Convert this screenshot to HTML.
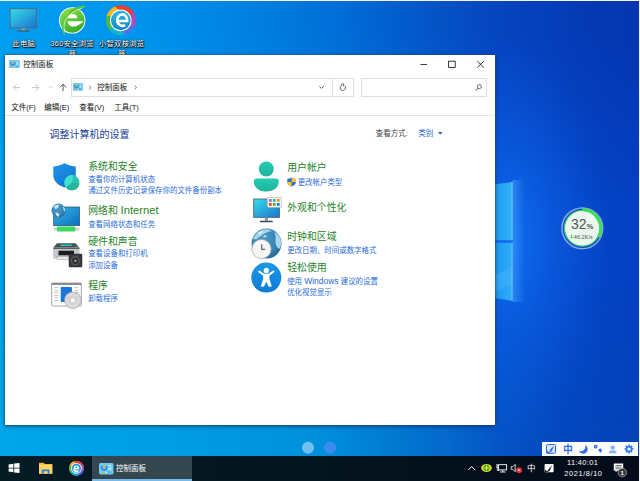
<!DOCTYPE html>
<html lang="zh-CN">
<head>
<meta charset="utf-8">
<title>控制面板</title>
<style>
*{margin:0;padding:0;box-sizing:border-box}
html,body{width:640px;height:481px;overflow:hidden;background:#0450c4}
body{position:relative;font-family:"Liberation Sans","Noto Sans CJK SC",sans-serif;font-size:7.5px;color:#000}
.abs{position:absolute}
svg{position:absolute;overflow:visible}
#bg{position:absolute;left:0;top:0;width:640px;height:481px;
 background:linear-gradient(90deg,#00a4ec 0%,#009cea 20%,#008ce4 40%,#0478dc 55%,#0664d6 68%,#0852d2 78%,#0648ca 88%,#0440c2 100%);}
#bgt{position:absolute;left:0;top:0;width:640px;height:481px;
 background:linear-gradient(90deg,#009ef0 0%,#0094ec 22%,#0080e0 39%,#0070d8 51.500%,#0450c4 70%,#0644c0 78%,#0438b2 94%,#0436b0 100%);
 -webkit-mask-image:linear-gradient(to bottom,#000 0%,#000 6%,transparent 42%);mask-image:linear-gradient(to bottom,#000 0%,#000 6%,transparent 42%);}
#bg2{position:absolute;left:0;top:0;width:640px;height:481px;
 background:linear-gradient(90deg,#00a6e8 0%,#009ee4 25%,#0090dc 50%,#0078d0 62.500%,#0468cc 70%,#0454c6 78%,#0448be 88%,#0442b6 100%);
 -webkit-mask-image:linear-gradient(to bottom,transparent 58%,#000 92%);mask-image:linear-gradient(to bottom,transparent 58%,#000 92%);}
#topline{position:absolute;left:0;top:0;width:640px;height:1px;background:#f4f4ec}
#rightline{position:absolute;left:638.800px;top:0;width:1.200px;height:481px;background:#eef0f8;z-index:5}
.dlabel{position:absolute;color:#fff;font-size:7.3px;letter-spacing:.3px;line-height:9.5px;text-align:center;width:52px;text-shadow:0 0 1.5px #000,.5px .8px 1.2px #000,.5px .8px 1.5px rgba(0,0,0,.8)}
#win{position:absolute;left:4.7px;top:55px;width:490px;height:369.6px;background:#fff;box-shadow:0 0 0 .6px rgba(60,90,120,.55),0 1px 4px rgba(0,25,60,.7)}
#win .t{position:absolute;white-space:nowrap;line-height:1}
.h{color:#26842a;font-size:9.9px}
.l{color:#2a6cdc;font-size:7.45px}
#taskbar{position:absolute;left:0;top:456.3px;width:640px;height:24.7px;background:linear-gradient(90deg,#051b25 0%,#04161f 45%,#040f1c 75%,#040b1a 100%)}
</style>
</head>
<body>
<svg width="0" height="0" style="position:absolute">
 <defs>
  <linearGradient id="gScreen" x1="0" y1="0" x2="1" y2="1"><stop offset="0" stop-color="#38dcea"/><stop offset="1" stop-color="#1874cc"/></linearGradient>
  <linearGradient id="gNet" x1="0" y1="0" x2="1" y2="1"><stop offset="0" stop-color="#34b8e4"/><stop offset="1" stop-color="#0f6cc0"/></linearGradient>
  <linearGradient id="gShield" x1="0" y1="0" x2="0.6" y2="1"><stop offset="0" stop-color="#2098e8"/><stop offset="1" stop-color="#1074d2"/></linearGradient>
  <linearGradient id="gUser" x1="0" y1="0" x2="0" y2="1"><stop offset="0" stop-color="#24ccb4"/><stop offset="1" stop-color="#1eb49c"/></linearGradient>
  <linearGradient id="gEase" x1="0" y1="0" x2="0" y2="1"><stop offset="0" stop-color="#1c98e6"/><stop offset="1" stop-color="#0c7cd6"/></linearGradient>
  <radialGradient id="gGlobe" cx="0.4" cy="0.35" r="0.7"><stop offset="0" stop-color="#4a9cc8"/><stop offset="0.7" stop-color="#3484b4"/><stop offset="1" stop-color="#20648c"/></radialGradient>
  <radialGradient id="gDisc" cx="0.5" cy="0.5" r="0.5"><stop offset="0" stop-color="#fff"/><stop offset="0.22" stop-color="#f4f4f4"/><stop offset="0.28" stop-color="#d0d0d0"/><stop offset="0.8" stop-color="#dedede"/><stop offset="1" stop-color="#bcbcbc"/></radialGradient>
  <linearGradient id="gXz" x1="0" y1="0" x2="0" y2="1"><stop offset="0" stop-color="#2abce4"/><stop offset="1" stop-color="#1684c8"/></linearGradient>
  <linearGradient id="g360" x1="0.2" y1="0" x2="0.7" y2="1"><stop offset="0" stop-color="#90e048"/><stop offset=".55" stop-color="#58c434"/><stop offset="1" stop-color="#38a828"/></linearGradient>
  
 </defs>
</svg>

<div id="bg"></div>
<div id="bgt"></div>
<div id="bg2"></div>
<!-- wallpaper window panes -->
<svg style="left:0;top:0" width="640" height="481" viewBox="0 0 640 481">
 <defs>
  <radialGradient id="glow" cx="0.5" cy="0.5" r="0.5"><stop offset="0" stop-color="#1070f4" stop-opacity=".85"/><stop offset=".5" stop-color="#0c64ec" stop-opacity=".4"/><stop offset="1" stop-color="#0a5ce8" stop-opacity="0"/></radialGradient>
  <linearGradient id="pane" x1="0" y1="0" x2="1" y2="0"><stop offset="0" stop-color="#1c9cf2"/><stop offset=".88" stop-color="#30aef8"/><stop offset="1" stop-color="#6cccff"/></linearGradient>
 </defs>
 <ellipse cx="512" cy="242" rx="95" ry="200" fill="url(#glow)"/>
 <linearGradient id="edge" x1="0" y1="0" x2="1" y2="0"><stop offset="0" stop-color="#48a8ff" stop-opacity=".5"/><stop offset="1" stop-color="#48a8ff" stop-opacity="0"/></linearGradient>
 <rect x="512.700" y="180" width="12" height="122" fill="url(#edge)"/>
 <polygon points="494,184.600 512.700,181.800 512.700,240.200 494,240.200" fill="url(#pane)"/>
 <polygon points="494,242.800 512.700,242.800 512.700,301 494,298" fill="url(#pane)" opacity=".94"/>
 <polygon points="494,276 512.700,266 512.700,284 494,292" fill="#60c0ff" opacity=".25"/>
 <circle cx="308" cy="447.8" r="6" fill="#70c0f0"/>
 <circle cx="330" cy="447.8" r="6" fill="#3a8cf0"/>
</svg>
<div id="topline"></div>
<div id="rightline"></div>

<!-- desktop icons -->
<svg style="left:0;top:0" width="160" height="56" viewBox="0 0 160 56">
 <!-- this pc -->
 <rect x="10.2" y="8.7" width="26.2" height="19.2" fill="url(#gScreen)" stroke="#566878" stroke-width=".9"/>
 <rect x="21.6" y="28.2" width="3.4" height="2.4" fill="#8c98a4"/>
 <rect x="17" y="30.4" width="12.6" height="1.4" fill="#4c5c6c"/>
 <!-- 360 -->
 <circle cx="72.200" cy="20.400" r="13.200" fill="#fff"/>
 <circle cx="72.200" cy="20.400" r="12.300" fill="url(#g360)"/>
 <path d="M67.600 18.200 A4.900 4.300 0 0 1 77.400 18.200 Z" fill="#fff"/>
 <path d="M67.400 21.200 H83.400 Q82 23.800 78.400 24.900 Q74.200 27.700 70.400 25.900 Q67.800 24.200 67.400 21.200Z" fill="#fff"/>
 <path d="M83 7.600 C73.500 10 64.600 17.500 64.100 24.500 C63.900 27.500 64.300 30 65 32" fill="none" stroke="#e8f8dc" stroke-width="1" stroke-linecap="round" opacity=".85"/>
 <path d="M84.500 6.400 C73 8.500 63.200 17 62.700 24.500 C62.500 28 63.200 31.500 64.400 34.200" fill="none" stroke="#64c83c" stroke-width="1.400" stroke-linecap="round"/>
 <path d="M84.500 6.400 C79 6.800 74 9 70 12" fill="none" stroke="#5cc034" stroke-width="1.800" stroke-linecap="round"/>
 <!-- xiaozhi -->
 <g>
  <circle cx="121" cy="20.2" r="14.6" fill="#4a74ee"/>
  <path d="M114.47 6.70 A15.00 15.00 0 0 1 133.41 11.77 L127.74 22.11 L123.87 13.82 Z" fill="#ee3e34"/>
  <path d="M133.17 11.43 A15.00 15.00 0 0 1 134.50 26.73 L122.72 26.99 L127.79 21.92 Z" fill="#a84cc0"/>
  <path d="M134.68 26.35 A15.00 15.00 0 0 1 124.68 34.74 L116.91 25.88 L122.91 26.94 Z" fill="#4a74ee"/>
  <path d="M125.08 34.63 A15.00 15.00 0 0 1 110.25 30.66 L114.04 19.49 L117.07 25.99 Z" fill="#12b4c8"/>
  <path d="M110.54 30.95 A15.00 15.00 0 0 1 106.57 16.12 L118.13 13.82 L114.02 19.69 Z" fill="#4cb848"/>
  <path d="M106.46 16.52 A15.00 15.00 0 0 1 114.85 6.52 L124.05 13.90 L117.95 13.90 Z" fill="#f8b81c"/>
  <circle cx="120.8" cy="20.4" r="10.800" fill="#fff"/>
  <circle cx="120.8" cy="20.4" r="9.800" fill="url(#gXz)"/>
  <path transform="translate(121.500 20.700) scale(6.300)" d="M-0.78 0.05 H0.9 A0.8 0.9 0 1 0 0.55 0.66" fill="none" stroke="#fff" stroke-width=".42"/>
 </g>
</svg>
<div class="dlabel" style="left:-2.300px;top:39px">此电脑</div>
<div class="dlabel" style="left:46.200px;top:39px">360安全浏览<br>器</div>
<div class="dlabel" style="left:95.700px;top:39px">小智双核浏览<br>器</div>

<div id="win">
 <svg style="left:4.6px;top:5px" width="10.9" height="8.1"><g transform="scale(0.4955 0.5062)"><rect x="0" y="0" width="22" height="16" rx="2.2" fill="#6ccaf8"/>
   <path d="M4.400 4.400 A3.900 3.900 0 1 0 11.400 4.400" fill="none" stroke="#1a8ee8" stroke-width="2.600"/>
   <circle cx="8.600" cy="5" r="2" fill="#f4a020"/>
   <rect x="3" y="12" width="6" height="1.8" rx=".6" fill="#f0a428"/>
   <rect x="9.5" y="12" width="2" height="1.8" fill="#fff"/>
   <path d="M14 4 l4 -1 M14 9 l5 -3 M15.5 6.5 l3 4" stroke="#fff" stroke-width="1.3" fill="none" opacity=".85"/>
   <rect x="13" y="12" width="6" height="1.6" fill="#3a9cf0" opacity=".8"/></g></svg>
 <div class="t" style="left:18.5px;top:5.5px;font-size:7.5px;color:#111">控制面板</div>
 <!-- caption buttons -->
 <svg style="left:0;top:0" width="490" height="62" viewBox="0 0 490 62">
  <path d="M415.5 9.5h6.5" stroke="#222" stroke-width=".9"/>
  <rect x="443.6" y="6.2" width="6.6" height="6.2" fill="none" stroke="#222" stroke-width=".9"/>
  <path d="M472.2 6 l6.8 6.6 M479 6 l-6.8 6.6" stroke="#222" stroke-width=".9"/>
  <!-- nav arrows -->
  <path d="M15.2 32.6 H8.4 M11.6 29.4 L8.4 32.6 L11.6 35.8" stroke="#c4c4c4" stroke-width="1" fill="none"/>
  <path d="M27 32.6 H33.8 M30.6 29.4 L33.8 32.6 L30.6 35.8" stroke="#c4c4c4" stroke-width="1" fill="none"/>
  <path d="M43.6 31 l2 2 l2 -2" stroke="#c8c8c8" stroke-width=".8" fill="none"/>
  <path d="M58 36 V29.2 M54.8 32.4 L58 29.2 L61.2 32.4" stroke="#555" stroke-width="1" fill="none"/>
  <!-- breadcrumb chevrons -->
  <path d="M84.2 30.8 l1.8 1.8 l-1.8 1.8" stroke="#555" stroke-width=".8" fill="none"/>
  <path d="M129.8 30.8 l1.8 1.8 l-1.8 1.8" stroke="#555" stroke-width=".8" fill="none"/>
  <path d="M314.4 31.2 l2.2 2.2 l2.2 -2.2" stroke="#444" stroke-width=".9" fill="none"/>
  <!-- refresh -->
  <path d="M339.6 30.8 a2.7 2.7 0 1 1 -2.6 -0.6" stroke="#444" stroke-width=".8" fill="none"/>
  <path d="M336 29 h2.6 v2.4" stroke="#444" stroke-width=".8" fill="none"/>
  <!-- search -->
  <circle cx="474.4" cy="31.6" r="2" stroke="#444" stroke-width=".8" fill="none"/>
  <path d="M473 33.2 l-2.2 2.4" stroke="#444" stroke-width=".9"/>
 </svg>
 <div class="t" style="left:6.5px;top:49px;font-size:7.5px;color:#111">文件(F)</div>
 <div class="t" style="left:39.5px;top:49px;font-size:7.5px;color:#111">编辑(E)</div>
 <div class="t" style="left:74.5px;top:49px;font-size:7.5px;color:#111">查看(V)</div>
 <div class="t" style="left:109.5px;top:49px;font-size:7.5px;color:#111">工具(T)</div>
 <div class="abs" style="left:0;top:60px;width:490px;height:1px;background:#e4e4e4"></div>
 <div class="abs" style="left:66px;top:22.5px;width:283px;height:19px;border:1px solid #dedede"></div>
 <div class="abs" style="left:327px;top:23px;width:1px;height:18px;background:#e2e2e2"></div>
 <div class="abs" style="left:356.5px;top:22.5px;width:126px;height:19px;border:1px solid #dedede"></div>
 <svg style="left:68.8px;top:28.2px" width="10" height="7.8"><g transform="scale(0.4545 0.4875)"><rect x="0" y="0" width="22" height="16" rx="2.2" fill="#6ccaf8"/>
   <path d="M4.400 4.400 A3.900 3.900 0 1 0 11.400 4.400" fill="none" stroke="#1a8ee8" stroke-width="2.600"/>
   <circle cx="8.600" cy="5" r="2" fill="#f4a020"/>
   <rect x="3" y="12" width="6" height="1.8" rx=".6" fill="#f0a428"/>
   <rect x="9.5" y="12" width="2" height="1.8" fill="#fff"/>
   <path d="M14 4 l4 -1 M14 9 l5 -3 M15.5 6.5 l3 4" stroke="#fff" stroke-width="1.3" fill="none" opacity=".85"/>
   <rect x="13" y="12" width="6" height="1.6" fill="#3a9cf0" opacity=".8"/></g></svg>
 <div class="t" style="left:92.5px;top:28.5px;font-size:7.5px;color:#111">控制面板</div>

 <div class="t" style="left:44.8px;top:75px;font-size:10px;color:#22419a">调整计算机的设置</div>
 <div class="t" style="left:371px;top:75px;font-size:7.5px;color:#444">查看方式:</div>
 <div class="t" style="left:413.5px;top:75px;font-size:7.5px;color:#1a5fd0">类别</div>
 <svg style="left:433px;top:77.4px" width="5" height="3"><path d="M0 0h4.6l-2.3 2.5z" fill="#1a5fd0"/></svg>

 <!-- category icons: coordinates in page space via translate(-4.5,-55) -->
 <svg style="left:0;top:0" width="490" height="369" viewBox="4.5 55 490 369">
  <!-- shield -->
  <path d="M64 163.300 C62.500 163.300 60 166.200 52.800 166.400 V175 C52.800 181 57.500 185.200 64 187.600 C70.500 185.200 75.300 181 75.300 175 V166.400 C68 166.200 65.500 163.300 64 163.300Z" fill="url(#gShield)"/>
  <circle cx="71.4" cy="182.7" r="7.6" fill="#2cc4ac"/>
  <path d="M71.4 182.7 L73 175.3 A7.6 7.6 0 0 0 64 181 A7.6 7.6 0 0 0 65.4 187.4Z" fill="#40e0d0"/>
  <path d="M71.4 182.7 L65.4 187.4 A7.6 7.6 0 0 0 78.9 183.8Z" fill="#26b498"/>
  <!-- network -->
  <rect x="53.2" y="207" width="25.8" height="18.6" fill="url(#gNet)" stroke="#2c5878" stroke-width=".8"/>
  <rect x="53" y="227.8" width="26" height="2.8" rx=".8" fill="#d0d0d0"/>
  <rect x="56.4" y="226.4" width="18.4" height="5" rx="1" fill="#3ed860"/>
  <circle cx="58" cy="210.6" r="7" fill="url(#gGlobe)"/>
  <path d="M53 207 q3 -3 6 -2 q-1 3 -4 4z M55 212 l4 2 l-1 3 q-3 -1 -3 -5z M62.5 206 q2.5 2 2 6 q-2 -2 -2 -6z" fill="#d8ecf8" opacity=".9"/>
  <!-- printer -->
  <path d="M56.5 243.2 H75 L79 247.8 H52.7Z" fill="#4a4e54"/>
  <rect x="59.8" y="244.6" width="11.6" height="1.4" rx=".7" fill="#20c8b8"/>
  <rect x="75.4" y="246" width="1.4" height="1" fill="#30c040"/>
  <rect x="52.7" y="247.8" width="26.3" height="10.8" fill="#c4c8cc"/>
  <rect x="52.7" y="247.8" width="26.3" height="1.2" fill="#5a5e64"/>
  <rect x="58" y="250.7" width="15.5" height="4.6" fill="#1c1c20"/>
  <rect x="56.4" y="256.4" width="15" height="3" fill="#e4e6e8" stroke="#888" stroke-width=".4"/>
  <rect x="68.5" y="254" width="13" height="13" rx=".8" fill="#38383c" stroke="#222" stroke-width=".5"/>
  <circle cx="74.9" cy="260.7" r="4.6" fill="#58585c"/>
  <circle cx="74.9" cy="260.7" r="3.2" fill="#2c2c30"/>
  <circle cx="74.9" cy="260.7" r="1.3" fill="#9a9a9e"/>
  <!-- programs -->
  <rect x="51.2" y="283" width="29.6" height="23" rx="1" fill="#fff" stroke="#9a9a9a" stroke-width=".9"/>
  <rect x="51.2" y="283" width="29.6" height="2" fill="#8c8c8c"/>
  <rect x="60.2" y="287" width="11.2" height="15" rx=".8" fill="#1878d8"/>
  <g stroke="#b0b4b8" stroke-width=".8">
   <path d="M54 287.6h3.8M54 290.6h3.8M54 292.6h3.8M54 295.6h3.8M54 297.6h3.8M54 300.6h3.8"/>
   <path d="M74 287.6h3.8M74 290.6h3.8M74 292.6h3.8"/>
  </g>
  <circle cx="72.3" cy="300.3" r="8.4" fill="url(#gDisc)" stroke="#a8a8a8" stroke-width=".5"/>
  <path d="M72.3 300.3 L64.5 297.6 A8.4 8.4 0 0 1 66 294.8Z" fill="#e8b8e0" opacity=".6"/>
  <path d="M72.3 300.3 L78 294 A8.4 8.4 0 0 1 79.6 296.2Z" fill="#b8e8c8" opacity=".6"/>
  <circle cx="72.3" cy="300.3" r="1.9" fill="#fff"/>
  <!-- user -->
  <circle cx="265.8" cy="168.9" r="7.5" fill="url(#gUser)"/>
  <path d="M256 178.6 H275.6 A2.7 2.7 0 0 1 278.3 181.3 C278.3 188 272.5 191.4 265.8 191.4 C259 191.4 253.3 188 253.3 181.3 A2.7 2.7 0 0 1 256 178.6Z" fill="url(#gUser)"/>
  <!-- small uac shield -->
  <path d="M291.1 177.6 C289.8 178.5 288.2 178.9 286.8 178.9 V182 C286.8 184.2 288.6 185.6 291.1 186.4 C293.6 185.6 295.4 184.2 295.4 182 V178.9 C294 178.9 292.4 178.5 291.1 177.6Z" fill="#2c6cd8"/>
  <path d="M291.1 177.6 C292.4 178.5 294 178.9 295.4 178.9 V182 H291.1Z" fill="#f8c820"/>
  <path d="M291.1 182 V186.4 C288.6 185.6 286.8 184.2 286.8 182Z" fill="#f8c820"/>
  <!-- appearance monitor -->
  <rect x="253.2" y="199" width="25.8" height="18.4" fill="url(#gScreen)" stroke="#566878" stroke-width=".9"/>
  <rect x="264.3" y="217.6" width="3.2" height="3.2" fill="#8c98a4"/>
  <rect x="259.3" y="220.8" width="13" height="1.5" rx=".6" fill="#3a4a58"/>
  <rect x="266.8" y="197.4" width="14" height="10" rx=".6" fill="#fff" stroke="#a0a0a0" stroke-width=".6"/>
  <rect x="268.4" y="199" width="2.8" height="2.8" fill="#9a68e0"/><rect x="272.4" y="199" width="2.8" height="2.8" fill="#20b8a8"/><rect x="276.4" y="199" width="2.8" height="2.8" fill="#f89018"/>
  <rect x="268.4" y="203" width="2.8" height="2.8" fill="#e84818"/><rect x="272.4" y="203" width="2.8" height="2.8" fill="#48b820"/><rect x="276.4" y="203" width="2.8" height="2.8" fill="#1878e0"/>
  <!-- clock globe -->
  <circle cx="266" cy="243.6" r="15" fill="url(#gGlobe)"/>
  <path d="M252.500 239 q2.500 -6 8.500 -9 q3.500 -1.200 7 -.6 q3 .8 4 2 q-4 -.5 -6.500 1.500 q-3.500 .5 -5.500 3.500 q-2 0 -3.500 2.500 q-2 .6 -4 .1z" fill="#c4e4f4" opacity=".8"/>
  <path d="M257 233 q3 -2 6 -2 l-2 2.500 q-2 1.500 -4 -.5z M262.500 236 l3 -1 l1 1.500 l-3 1z" fill="#e4f2fa" opacity=".8"/>
  <path d="M274 232 q5 3 6.500 9 q.5 5 -1.500 8 q-4 -2 -4 -8 q1 -4 -1 -9z" fill="#b8e0f4" opacity=".9"/>
  <circle cx="261" cy="249" r="9.6" fill="#f6f6f6" stroke="#a8a8a8" stroke-width=".8"/>
  <path d="M261.200 244.200 V249.400 H264.700" stroke="#666" stroke-width="1.200" fill="none"/>
  <!-- ease of access -->
  <circle cx="265.8" cy="277.6" r="15" fill="url(#gEase)"/>
  <circle cx="265.8" cy="270.4" r="2.650" fill="#fff"/>
  <path d="M258.700 271.700 L263.400 274.900 H268.200 L272.900 271.700" stroke="#fff" stroke-width="2.100" stroke-linecap="round" stroke-linejoin="round" fill="none"/>
  <path d="M263.200 274.400 H268.400 L268.700 279.600 L270.900 286.300 H268.300 L265.800 281 L263.300 286.300 H260.700 L262.900 279.600Z" fill="#fff" stroke="#fff" stroke-width=".7" stroke-linejoin="round"/>
 </svg>

 <div class="t h" style="left:83.5px;top:106.8px">系统和安全</div>
 <div class="t l" style="left:83.5px;top:120.8px">查看你的计算机状态</div>
 <div class="t l" style="left:83.5px;top:131.8px">通过文件历史记录保存你的文件备份副本</div>
 <div class="t h" style="left:83.5px;top:150.3px">网络和 <span style="font-size:11.2px">Internet</span></div>
 <div class="t l" style="left:83.5px;top:165.5px">查看网络状态和任务</div>
 <div class="t h" style="left:83.5px;top:181.5px">硬件和声音</div>
 <div class="t l" style="left:83.5px;top:195.4px">查看设备和打印机</div>
 <div class="t l" style="left:83.5px;top:207.4px">添加设备</div>
 <div class="t h" style="left:83.5px;top:226.2px">程序</div>
 <div class="t l" style="left:83.5px;top:240px">卸载程序</div>

 <div class="t h" style="left:282.5px;top:108.3px">用户帐户</div>
 <div class="t l" style="left:293px;top:123.8px">更改帐户类型</div>
 <div class="t h" style="left:282.5px;top:147.8px">外观和个性化</div>
 <div class="t h" style="left:282.5px;top:176.5px">时钟和区域</div>
 <div class="t l" style="left:282.5px;top:192px">更改日期、时间或数字格式</div>
 <div class="t h" style="left:282.5px;top:207.5px">轻松使用</div>
 <div class="t l" style="left:282.5px;top:222px">使用 <span style="font-size:8.5px">Windows</span> 建议的设置</div>
 <div class="t l" style="left:282.5px;top:233.8px">优化视觉显示</div>
</div>

<!-- floating widget -->
<svg style="left:556px;top:202px" width="54" height="54" viewBox="556 202 54 54">
 <circle cx="582.3" cy="228.3" r="20.400" fill="none" stroke="#8ea6de" stroke-width="1.500"/>
 <circle cx="582.3" cy="228.3" r="17.6" fill="#eaf8ee"/>
 <circle cx="582.3" cy="228.3" r="17.8" fill="none" stroke="#48d868" stroke-width="1.2"/>
 <path d="M582.3 209.700 A18.600 18.600 0 0 1 598.600 237.200" fill="none" stroke="#3edc5c" stroke-width="3.200"/>
 <text x="571" y="229" font-family="Liberation Sans, sans-serif" font-size="14.500" fill="#555" textLength="15.600" lengthAdjust="spacingAndGlyphs">32</text>
 <text x="586.800" y="229" font-family="Liberation Sans, sans-serif" font-size="7.500" font-weight="bold" fill="#555">%</text>
 <path d="M571.600 234.400 v3.600 m-1.200 -1.200 l1.200 1.400 l1.200 -1.400" stroke="#38c850" stroke-width=".9" fill="none"/>
 <text x="573.800" y="239" font-family="Liberation Sans, sans-serif" font-size="5.600" fill="#505050">46.2K/s</text>
</svg>

<!-- IME bar -->
<div class="abs" style="left:542px;top:441.800px;width:96.200px;height:14.600px;background:#fdfdfd"></div>
<svg style="left:542px;top:441px" width="98" height="16" viewBox="542 441 98 16">
 <rect x="546.500" y="444.500" width="9" height="8.800" rx="1" fill="#dce8fc" stroke="#2a6af0" stroke-width="1"/>
 <path d="M554 445.800 L550.200 449.600 L549 452.600 L551.800 451.200 Z" fill="#2a6af0"/>
 <path d="M546.500 449.500 q2 3.800 6 3.800 L546.500 453.300Z" fill="#2a6af0"/>
 <path d="M585.200 445 a4.700 4.700 0 0 1 -6.400 5.800 a4.600 4.600 0 1 0 6.400 -5.800z" fill="#2a6af0"/>
 <circle cx="595.700" cy="446.700" r="1.300" fill="#9ab8f8" stroke="#2a6af0" stroke-width="1.200"/>
 <path d="M598.500 450.200 a1.700 1.700 0 1 1 3.400 0 q0 2.200 -2.600 3.200 q1.200 -1 1 -1.600 a1.700 1.700 0 0 1 -1.800 -1.600z" fill="#2a6af0"/>
 <circle cx="612.700" cy="447.600" r="2.200" fill="#8ab0f4"/>
 <path d="M608.700 453.300 q0 -3 4 -3 q4 0 4 3z" fill="#8ab0f4"/>
 <g transform="translate(629 449)">
  <g fill="#3a78f4">
   <rect x="-.9" y="-4.400" width="1.800" height="8.800"/>
   <rect x="-.9" y="-4.400" width="1.800" height="8.800" transform="rotate(45)"/>
   <rect x="-.9" y="-4.400" width="1.800" height="8.800" transform="rotate(90)"/>
   <rect x="-.9" y="-4.400" width="1.800" height="8.800" transform="rotate(135)"/>
   <circle r="3.300"/>
  </g>
  <circle r="1.600" fill="#fdfdfd"/>
 </g>
</svg>
<div class="abs" style="left:562.900px;top:444.800px;font-size:9.800px;line-height:1;font-weight:bold;color:#2a6af0">中</div>

<div id="taskbar">
 <div class="abs" style="left:92.2px;top:0;width:100px;height:24.7px;background:#34474f"></div>
 <div class="abs" style="left:92.2px;top:22.7px;width:100px;height:2px;background:#76b9ed"></div>
 <svg style="left:0;top:0" width="640" height="25" viewBox="0 456.300 640 25">
  <!-- start -->
  <path d="M8.600 464.700 L13.400 464 V468 H8.600Z M14.200 463.900 L19.500 463.200 V468 H14.200Z M8.600 468.700 H13.400 V472.600 L8.600 471.900Z M14.200 468.700 H19.500 V473.400 L14.200 472.700Z" fill="#fff"/>
  <!-- explorer -->
  <path d="M39 463 h4.600 l1.200 1.400 h7.500 v9.600 h-13.300z" fill="#f4b62c"/>
  <rect x="39" y="465" width="13.300" height="9" fill="#fcd462"/>
  <path d="M41.800 474 v-4.200 h7.700 v4.200 h-1.800 v-2.400 h-4.100 v2.400z" fill="#2a7ce0"/>
  <!-- browser -->
  <g>
   <circle cx="76.500" cy="468.500" r="7.300" fill="#4a74ee"/>
   <path d="M73.24 461.75 A7.50 7.50 0 0 1 82.70 464.28 L79.87 469.45 L77.93 465.31 Z" fill="#ee3e34"/>
   <path d="M82.58 464.11 A7.50 7.50 0 0 1 83.25 471.76 L77.36 471.89 L79.89 469.36 Z" fill="#a84cc0"/>
   <path d="M83.34 471.57 A7.50 7.50 0 0 1 78.34 475.77 L74.45 471.34 L77.45 471.87 Z" fill="#4a74ee"/>
   <path d="M78.54 475.72 A7.50 7.50 0 0 1 71.12 473.73 L73.02 468.15 L74.53 471.39 Z" fill="#12b4c8"/>
   <path d="M71.27 473.88 A7.50 7.50 0 0 1 69.28 466.46 L75.07 465.31 L73.01 468.24 Z" fill="#4cb848"/>
   <path d="M69.23 466.66 A7.50 7.50 0 0 1 73.43 461.66 L78.02 465.35 L74.98 465.35 Z" fill="#f8b81c"/>
   <circle cx="76.400" cy="468.600" r="5.400" fill="#fff"/>
   <circle cx="76.400" cy="468.600" r="4.600" fill="#1c9cd8"/>
   <path d="M73.600 468.800 a2.800 2.800 0 0 1 5.600 -0.200 v1 h-4 a1.500 1.500 0 0 0 2.600 .6 l1.200 .6 a2.800 2.800 0 0 1 -5.400 -2z M75.200 468 h2.500 a1.250 1.250 0 0 0 -2.500 0z" fill="#fff" fill-rule="evenodd"/>
  </g>
  <!-- tray chevron -->
  <path d="M468.200 470.400 L471.700 466.800 L475.200 470.400" stroke="#fff" stroke-width="1" fill="none"/>
  <!-- 360 tray -->
  <ellipse cx="486.500" cy="468.200" rx="5.300" ry="4" fill="#f4d820"/>
  <circle cx="486.500" cy="468.200" r="3.100" fill="#38b030"/>
  <path d="M484.500 468.200 h4 M486.500 466.200 v4" stroke="#f4e840" stroke-width="1"/>
  <!-- network -->
  <rect x="498.600" y="465" width="8" height="5.200" fill="none" stroke="#fff" stroke-width=".9"/>
  <path d="M500 472.300 h5.600 M502.800 470.200 v2" stroke="#fff" stroke-width=".9"/>
  <path d="M496 465.200 h2.600 M496 467.400 h2.600 M497.300 465.200 v5.600 h2" stroke="#fff" stroke-width=".8" fill="none"/>
  <!-- speaker -->
  <path d="M511.200 467 h1.600 l2.400 -2.400 v7.400 l-2.400 -2.400 h-1.600z" fill="none" stroke="#fff" stroke-width=".8"/>
  <circle cx="519" cy="470.500" r="3" fill="#e02c2c"/>
  <path d="M517.800 469.300 l2.400 2.400 M520.200 469.300 l-2.400 2.400" stroke="#fff" stroke-width=".7"/>
  <!-- ime tray icon -->
  <rect x="544.600" y="464.200" width="9" height="8.400" rx=".8" fill="#fff"/>
  <path d="M552.200 465.400 L548.400 469.800 L546.800 472.200 L549.600 471.400 Z" fill="#061a26"/>
  <path d="M545 469.800 q2 2.600 4.400 2.600 L545 472.400Z" fill="#061a26"/>
  <!-- action center -->
  <path d="M613.800 463.800 h9.400 v7 h-5.600 l-2 1.800 v-1.800 h-1.800z" fill="#fff"/>
  <path d="M615.400 465.800 h6.200 M615.400 467.400 h6.200 M615.400 469 h4" stroke="#061a26" stroke-width=".6"/>
  <circle cx="622.300" cy="472.800" r="4.300" fill="#3a3a3a" stroke="#c8c8c8" stroke-width=".6"/>
 </svg>
 <svg style="left:98.500px;top:6.300px" width="14.500" height="11.400"><g transform="scale(0.6591 0.7125)"><rect x="0" y="0" width="22" height="16" rx="2.2" fill="#6ccaf8"/>
   <path d="M4.400 4.400 A3.900 3.900 0 1 0 11.400 4.400" fill="none" stroke="#1a8ee8" stroke-width="2.600"/>
   <circle cx="8.600" cy="5" r="2" fill="#f4a020"/>
   <rect x="3" y="12" width="6" height="1.8" rx=".6" fill="#f0a428"/>
   <rect x="9.5" y="12" width="2" height="1.8" fill="#fff"/>
   <path d="M14 4 l4 -1 M14 9 l5 -3 M15.5 6.5 l3 4" stroke="#fff" stroke-width="1.3" fill="none" opacity=".85"/>
   <rect x="13" y="12" width="6" height="1.6" fill="#3a9cf0" opacity=".8"/></g></svg>
 <div class="abs" style="left:116px;top:8.300px;font-size:7.500px;line-height:1;color:#fff;white-space:nowrap">控制面板</div>
 <div class="abs" style="left:567px;top:3.200px;font-size:7.400px;letter-spacing:.38px;line-height:1;color:#fff;white-space:nowrap">11:40:01</div>
 <div class="abs" style="left:564.300px;top:14px;font-size:7.400px;letter-spacing:.6px;line-height:1;color:#fff;white-space:nowrap">2021/8/10</div>
 <div class="abs" style="left:527px;top:7.500px;font-size:8.500px;line-height:1;color:#fff;white-space:nowrap">中</div>
 <div class="abs" style="left:620.600px;top:13.400px;font-size:6px;line-height:1;font-weight:bold;color:#fff;white-space:nowrap">1</div>
</div>
</body>
</html>
